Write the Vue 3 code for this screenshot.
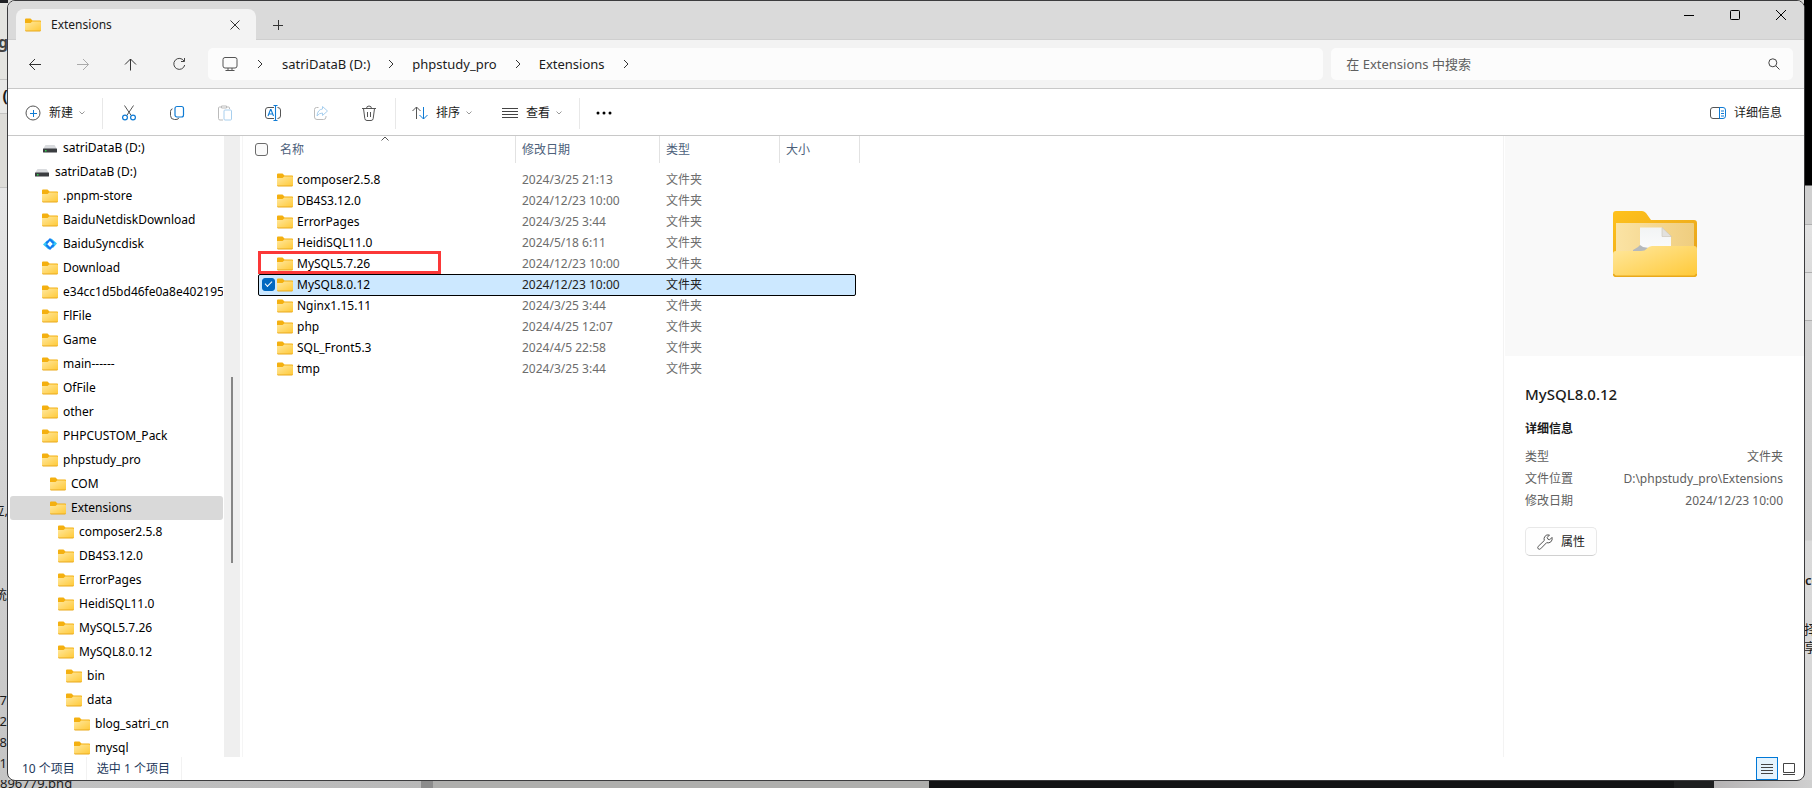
<script setup>
import { ref } from 'vue'

const tree = [
  { name: 'satriDataB (D:)', level: 0, icon: 'drive' },
  { name: 'satriDataB (D:)', level: -1, icon: 'drive' },
  { name: '.pnpm-store', level: 0 },
  { name: 'BaiduNetdiskDownload', level: 0 },
  { name: 'BaiduSyncdisk', level: 0, icon: 'sync' },
  { name: 'Download', level: 0 },
  { name: 'e34cc1d5bd46fe0a8e402195', level: 0 },
  { name: 'FlFile', level: 0 },
  { name: 'Game', level: 0 },
  { name: 'main------', level: 0 },
  { name: 'OfFile', level: 0 },
  { name: 'other', level: 0 },
  { name: 'PHPCUSTOM_Pack', level: 0 },
  { name: 'phpstudy_pro', level: 0 },
  { name: 'COM', level: 1 },
  { name: 'Extensions', level: 1, current: true },
  { name: 'composer2.5.8', level: 2 },
  { name: 'DB4S3.12.0', level: 2 },
  { name: 'ErrorPages', level: 2 },
  { name: 'HeidiSQL11.0', level: 2 },
  { name: 'MySQL5.7.26', level: 2 },
  { name: 'MySQL8.0.12', level: 2 },
  { name: 'bin', level: 3 },
  { name: 'data', level: 3 },
  { name: 'blog_satri_cn', level: 4 },
  { name: 'mysql', level: 4 },
]

const files = ref([
  { name: 'composer2.5.8', date: '2024/3/25 21:13' },
  { name: 'DB4S3.12.0', date: '2024/12/23 10:00' },
  { name: 'ErrorPages', date: '2024/3/25 3:44' },
  { name: 'HeidiSQL11.0', date: '2024/5/18 6:11' },
  { name: 'MySQL5.7.26', date: '2024/12/23 10:00', marked: true },
  { name: 'MySQL8.0.12', date: '2024/12/23 10:00', selected: true },
  { name: 'Nginx1.15.11', date: '2024/3/25 3:44' },
  { name: 'php', date: '2024/4/25 12:07' },
  { name: 'SQL_Front5.3', date: '2024/4/5 22:58' },
  { name: 'tmp', date: '2024/3/25 3:44' },
])

const crumbs = ['satriDataB (D:)', 'phpstudy_pro', 'Extensions']
const query = ref('')
</script>

<template>
  <div class="desktop">
    <svg class="defs" width="0" height="0" aria-hidden="true">
      <defs>
        <linearGradient id="fold" x1="0" y1="0" x2="1" y2="1">
          <stop offset="0" stop-color="#ffe89f" />
          <stop offset="1" stop-color="#ffc937" />
        </linearGradient>
        <linearGradient id="foldBack" x1="0" y1="0" x2="1" y2="1">
          <stop offset="0" stop-color="#ffc21c" />
          <stop offset="1" stop-color="#e6a21c" />
        </linearGradient>
        <linearGradient id="foldInner" x1="0" y1="0" x2="1" y2="0">
          <stop offset="0" stop-color="#fbe3a4" />
          <stop offset="1" stop-color="#efcd7f" />
        </linearGradient>
        <linearGradient id="paper" x1="0" y1="0" x2="0" y2="1">
          <stop offset="0" stop-color="#f2f4f5" />
          <stop offset="1" stop-color="#fdfdfd" />
        </linearGradient>
        <symbol id="i-folder" viewBox="0 0 16 16">
          <path d="M0 2.500Q0 1.500 1 1.500H5.500L7.500 3.500H15.200Q16 3.500 16 4.300V8H0Z" fill="#f4b010" />
          <path d="M0 6H5.600L7.200 4.600H15.200Q16 4.600 16 5.400V13.200Q16 14 15.200 14H.8Q0 14 0 13.200Z" fill="url(#fold)" />
          <path d="M.2 13.500Q.4 14 1 14H15Q15.600 14 15.800 13.500" fill="none" stroke="#e9a91c" />
        </symbol>
        <symbol id="i-drive" viewBox="0 0 16 16">
          <path d="M3.500 5H12.500L15 9H1Z" fill="#d9dbde" />
          <rect x="1" y="8.500" width="14" height="4" rx=".6" fill="#3b3d40" />
          <rect x="3" y="10" width="1.500" height="1.500" fill="#30d44c" />
        </symbol>
        <symbol id="i-sync" viewBox="0 0 16 16">
          <path d="M1 8.500L5 4.500L7 6L5 8.500L8 11L6.500 13.500Z" fill="#35c8f5" />
          <path d="M15 7.500L11 12L9 10L11 8L8 5L9.500 2.500Z" fill="#35c8f5" />
          <path d="M3.500 6.500L8 2L12.500 6.500L11 8L8 5L5 8ZM12.500 9.500L8 14L3.500 9.500L5 8L8 11L11 8Z" fill="#157bf2" />
        </symbol>
        <symbol id="i-chev" viewBox="0 0 8 10">
          <path d="M2 1L6 5L2 9" fill="none" stroke="#333" />
        </symbol>
        <symbol id="i-down" viewBox="0 0 8 8">
          <path d="M1.500 2.500L4 5L6.500 2.500" fill="none" stroke="#999" />
        </symbol>
      </defs>
    </svg>

    <div class="backdrop" aria-hidden="true">
      <div class="strip left">
        <span class="peek g">g</span>
        <span class="peek paren">(</span>
        <span class="peek yi">应,</span>
        <span class="peek tong">统</span>
        <span class="peek n1">7</span>
        <span class="peek n2">2</span>
        <span class="peek n3">8</span>
        <span class="peek n4">1</span>
      </div>
      <div class="strip right">
        <span class="peek co">co</span>
        <span class="peek ze">择</span>
        <span class="peek xiang">享</span>
      </div>
      <div class="strip bottom"><span class="peek png">896779.png</span></div>
    </div>

    <main class="window">
      <header class="titlebar">
        <div class="tab">
          <svg width="16" height="16"><use href="#i-folder" /></svg>
          <span class="tab-name">Extensions</span>
          <button class="tab-close" aria-label="关闭标签页">
            <svg width="10" height="10" viewBox="0 0 10 10"><path d="M.5 .5L9.500 9.500M9.500 .5L.5 9.500" fill="none" stroke="#333" /></svg>
          </button>
        </div>
        <button class="add" aria-label="新标签页">
          <svg width="10" height="10" viewBox="0 0 10 10"><path d="M5.500 0V10M0 5.500H10" fill="none" stroke="#333" /></svg>
        </button>
        <div class="win-buttons">
          <button aria-label="最小化"><svg width="10" height="10" viewBox="0 0 10 10"><path d="M0 5.500H10" stroke="#000" /></svg></button>
          <button aria-label="最大化"><svg width="10" height="10" viewBox="0 0 10 10"><rect x=".5" y=".5" width="9" height="9" rx=".8" fill="none" stroke="#000" /></svg></button>
          <button aria-label="关闭"><svg width="10" height="10" viewBox="0 0 10 10"><path d="M0 0L10 10M10 0L0 10" stroke="#000" /></svg></button>
        </div>
      </header>

      <nav class="address">
        <div class="history">
          <button aria-label="后退"><svg width="14" height="14" viewBox="0 0 14 14"><path d="M13 7.500H1.500M7 2L1.500 7.500L7 13" fill="none" stroke="#333" /></svg></button>
          <button aria-label="前进"><svg width="14" height="14" viewBox="0 0 14 14"><path d="M1 7.500H12.500M7 2L12.500 7.500L7 13" fill="none" stroke="#aaa" /></svg></button>
          <button aria-label="向上"><svg width="14" height="14" viewBox="0 0 14 14"><path d="M6.500 13.500V2M1 7.500L6.500 2L12 7.500" fill="none" stroke="#333" /></svg></button>
          <button aria-label="刷新"><svg width="14" height="14" viewBox="0 0 14 14"><path d="M12 4A5.500 5.500 0 1 0 12.700 8M12.500 1V4.500H9" fill="none" stroke="#444" /></svg></button>
        </div>
        <div class="path">
          <svg width="16" height="16" viewBox="0 0 16 16"><rect x="1" y="1.500" width="14" height="10.500" rx="2" fill="none" stroke="#555" /><path d="M6 12V14.500M10 12V14.500M3.500 14.500H12.500" stroke="#555" fill="none" /></svg>
          <svg class="sep root" width="8" height="10"><use href="#i-chev" /></svg>
          <template v-for="c in crumbs" :key="c">
            <a href="#" class="crumb">{{ c }}</a>
            <svg class="sep" width="8" height="10"><use href="#i-chev" /></svg>
          </template>
        </div>
        <label class="search">
          <input v-model="query" type="text" placeholder="在 Extensions 中搜索" aria-label="搜索" />
          <svg width="12" height="12" viewBox="0 0 12 12"><circle cx="4.800" cy="4.800" r="4" fill="none" stroke="#444" /><path d="M7.700 7.700L11.500 11.500" stroke="#444" /></svg>
        </label>
      </nav>

      <div class="toolbar" role="toolbar">
        <button class="tool">
          <svg width="16" height="16" viewBox="0 0 16 16"><circle cx="8" cy="8" r="7" fill="none" stroke="#555" /><path d="M8.500 5V12M5 8.500H12" stroke="#0f7bd4" /></svg>
          <span>新建</span>
          <svg class="down" width="8" height="8"><use href="#i-down" /></svg>
        </button>
        <i class="bar"></i>
        <div class="icons">
          <button aria-label="剪切"><svg width="16" height="16" viewBox="0 0 16 16"><path d="M3.500 .5L10.200 10.500M12.500 .5L5.800 10.500" stroke="#555" fill="none" /><circle cx="4" cy="12.500" r="2.400" fill="none" stroke="#0f7bd4" stroke-width="1.200" /><circle cx="12" cy="12.500" r="2.400" fill="none" stroke="#0f7bd4" stroke-width="1.200" /></svg></button>
          <button aria-label="复制"><svg width="16" height="16" viewBox="0 0 16 16"><path d="M3.500 3.800Q1.500 4.200 1.500 6.500V10.500Q1.500 14.500 5.500 14.500H7Q9.500 14.500 9.800 12.800" fill="none" stroke="#555" /><rect x="6" y="1.500" width="8.500" height="10.500" rx="2" fill="none" stroke="#0f7bd4" stroke-width="1.200" /></svg></button>
          <button aria-label="粘贴"><svg width="16" height="16" viewBox="0 0 16 16"><path d="M6 15H3Q1.500 15 1.500 13.500V3Q1.500 2 2.500 2H4.500M9.500 2H11.500Q12.500 2 12.500 3V4M4.500 1H9.500V3H4.500Z" fill="none" stroke="#bbb" /><rect x="7" y="5" width="7.500" height="10" rx="1" fill="none" stroke="#a8cfee" /></svg></button>
          <button aria-label="重命名"><svg width="16" height="16" viewBox="0 0 16 16"><path d="M9 2.500H3Q.5 2.500 .5 5V11Q.5 13.500 3 13.500H9M12.500 2.500Q15.500 2.500 15.500 5V11Q15.500 13.500 12.500 13.500" fill="none" stroke="#555" /><path d="M3 11L5.500 4.500H6L8.500 11M4 9H7.500M10.500 1V15M8.500 .5H12.500M8.500 15.500H12.500" fill="none" stroke="#0f7bd4" stroke-width="1.100" /></svg></button>
          <button aria-label="共享"><svg width="16" height="16" viewBox="0 0 16 16"><path d="M5.500 2.500H3.500Q1.500 2.500 1.500 4.500V12Q1.500 14.500 4 14.500H10.500Q13 14.500 13 12V11" fill="none" stroke="#bbb" /><path d="M9.500 1.500L14.500 6L9.500 10.500V8Q6 8 4 11Q4.500 4.500 9.500 4Z" fill="none" stroke="#a8cfee" /></svg></button>
          <button aria-label="删除"><svg width="16" height="16" viewBox="0 0 16 16"><path d="M1 3.500H15M5.500 3.500Q5.500 1 8 1T10.500 3.500M2.500 3.500L3.800 13.500Q4 15.500 6 15.500H10Q12 15.500 12.200 13.500L13.500 3.500M6.500 7V12M9.500 7V12" fill="none" stroke="#555" /></svg></button>
        </div>
        <i class="bar"></i>
        <button class="tool">
          <svg width="16" height="16" viewBox="0 0 16 16"><path d="M4.500 14V2M.5 6L4.500 2L8.500 6" fill="none" stroke="#555" /><path d="M11.500 2V14M7.500 10L11.500 14L15.500 10" fill="none" stroke="#0f7bd4" /></svg>
          <span>排序</span>
          <svg class="down" width="8" height="8"><use href="#i-down" /></svg>
        </button>
        <button class="tool view">
          <svg width="16" height="16" viewBox="0 0 16 16"><path d="M0 3.500H16M0 6.500H16M0 9.500H16M0 12.500H16" stroke="#444" /></svg>
          <span>查看</span>
          <svg class="down" width="8" height="8"><use href="#i-down" /></svg>
        </button>
        <i class="bar"></i>
        <button class="tool" aria-label="更多"><svg width="16" height="4" viewBox="0 0 16 4"><circle cx="2" cy="2" r="1.500" /><circle cx="8" cy="2" r="1.500" /><circle cx="14" cy="2" r="1.500" /></svg></button>
        <button class="tool info">
          <svg width="16" height="16" viewBox="0 0 16 16"><path d="M10 2.500H3Q.5 2.500 .5 5V11Q.5 13.500 3 13.500H10" fill="none" stroke="#555" /><path d="M9.500 2.500H13Q15.500 2.500 15.500 5V11Q15.500 13.500 13 13.500H9.500ZM11 6H14M11 8.500H14M11 11H14" fill="none" stroke="#0f7bd4" /></svg>
          <span>详细信息</span>
        </button>
      </div>

      <div class="content">
        <aside class="side">
          <ul class="tree">
            <li v-for="(n, i) in tree" :key="i">
              <a href="#" :class="['node', 'level' + (n.level + 1), { current: n.current }]">
                <svg width="16" height="16"><use :href="'#i-' + (n.icon || 'folder')" /></svg>
                <span>{{ n.name }}</span>
              </a>
            </li>
          </ul>
          <div class="scroll"><i class="thumb"></i></div>
        </aside>

        <section class="list">
          <table>
            <colgroup>
              <col class="c-check" /><col class="c-name" /><col class="c-date" /><col class="c-type" /><col class="c-size" />
            </colgroup>
            <thead>
              <tr>
                <th class="check"><input type="checkbox" aria-label="全选" /></th>
                <th>名称<svg class="sort" width="8" height="5" viewBox="0 0 8 5"><path d="M.5 4.500L4 1L7.500 4.500" fill="none" stroke="#555" /></svg></th>
                <th>修改日期</th>
                <th>类型</th>
                <th>大小</th>
              </tr>
            </thead>
            <tbody>
              <tr v-for="f in files" :key="f.name" :class="{ selected: f.selected, marked: f.marked }">
                <td class="check"><input v-if="f.selected" v-model="f.selected" type="checkbox" :aria-label="f.name" /></td>
                <td class="name"><span class="file"><svg width="16" height="16"><use href="#i-folder" /></svg>{{ f.name }}</span></td>
                <td>{{ f.date }}</td>
                <td>文件夹</td>
                <td></td>
              </tr>
            </tbody>
          </table>
        </section>

        <aside class="details">
          <div class="preview">
            <svg width="84" height="66" viewBox="0 0 84 66">
              <path d="M0 3Q0 0 3 0H29Q31 0 33 2L38 9H81Q84 9 84 12V50H0Z" fill="url(#foldBack)" />
              <path d="M3 12H80Q81 12 81 13V45H3Z" fill="url(#foldInner)" />
              <path d="M27 16.500H49L58 26V45H27Z" fill="url(#paper)" />
              <path d="M49 16.500L58.500 25.500H49Z" fill="#e2e1de" stroke="#c9c3b4" stroke-width=".6" />
              <path d="M20 39L25 36L27 34L30 36L36 37L32 40H20Z" fill="#b5b9bd" />
              <path d="M0 43Q0 40 3 40H28Q32 40 34 37.500Q36 35 39 35H81Q84 35 84 38V63Q84 66 81 66H3Q0 66 0 63Z" fill="url(#fold)" />
              <path d="M.5 63Q1 65.300 3 65.300H81Q83 65.300 83.500 63" fill="none" stroke="#e9a91c" stroke-width="1.500" />
            </svg>
          </div>
          <div class="facts">
            <h2>MySQL8.0.12</h2>
            <h3>详细信息</h3>
            <dl>
              <div><dt>类型</dt><dd>文件夹</dd></div>
              <div><dt>文件位置</dt><dd>D:\phpstudy_pro\Extensions</dd></div>
              <div><dt>修改日期</dt><dd>2024/12/23 10:00</dd></div>
            </dl>
            <button class="props">
              <svg width="16" height="16" viewBox="0 0 16 16"><path d="M12.500 1Q9.500 .2 7.800 2.500Q6.600 4.300 7.300 6.500L1.200 12.400Q.2 13.600 1.200 14.800Q2.500 15.800 3.600 14.800L9.600 8.700Q12 9.400 13.800 7.900Q15.800 6 15 3.400L12.600 5.800L10.900 5.200L10.200 3.400Z" fill="none" stroke="#555" /></svg>
              <span>属性</span>
            </button>
          </div>
        </aside>
      </div>

      <footer class="status">
        <span>10 个项目</span>
        <span>选中 1 个项目</span>
        <div class="modes">
          <button class="active" aria-label="详细列表"><svg width="12" height="12" viewBox="0 0 12 12"><path d="M0 1.500H12M0 4.500H12M0 7.500H12M0 10.500H12" stroke="#444" /></svg></button>
          <button aria-label="大图标"><svg width="12" height="12" viewBox="0 0 12 12"><path d="M.5 .5H11.500V9.500H.5ZM0 11.500H12" fill="none" stroke="#444" /></svg></button>
        </div>
      </footer>
    </main>
  </div>
</template>

<style>
body {
  margin: 0;
}
</style>

<style scoped>
* {
  box-sizing: border-box;
}
.desktop {
  position: relative;
  display: flex;
  height: 100vh;
  padding: 0 7px 7px;
  overflow: hidden;
  background: #d8d8d6;
  font: 12px/20px "Noto Sans", "Noto Sans CJK SC", sans-serif;
  color: #1b1b1b;
}
.defs {
  position: absolute;
}
button {
  display: flex;
  align-items: center;
  justify-content: center;
  padding: 0;
  border: 0;
  background: none;
  color: inherit;
  font: inherit;
}
svg {
  display: block;
  flex: none;
}
a {
  color: inherit;
  text-decoration: none;
}

/* Other windows behind this one */
.backdrop {
  position: absolute;
  inset: 0;
}
.strip {
  position: absolute;
  overflow: hidden;
}
.left {
  inset: 0 auto 0 0;
  width: 8px;
  background: linear-gradient(#202124 3px, #e4e4e0 3px, #e4e4e0 79px, #c4c4c2 79px, #c4c4c2 80px, #e8e8e6 80px, #e8e8e6 113px, #c4c4c2 113px, #c4c4c2 114px, #dddcd8 114px, #dddcd8 187px, #c4c4c2 187px, #c4c4c2 188px, #e6e6e6 188px, #d2d2d2 500px, #c4c4c4);
}
.right {
  inset: 0 0 0 auto;
  width: 8px;
  background: linear-gradient(#000 185px, #cfcfcf 186px, #cfcfcf 224px, #b0b0b0 224px, #b0b0b0 225px, #e2e2e2 225px, #dcdcdc 272px, #b0b0b0 272px, #b0b0b0 273px, #e0e0e0 273px, #e0e0e0 320px, #b0b0b0 320px, #b0b0b0 321px, #d2d2d2 321px, #cdcdcd 540px, #dadada 541px, #d4d4d4);
}
.bottom {
  inset: auto 0 0;
  height: 8px;
  background: linear-gradient(90deg, #c3c3c3 0, #b8b8b8 421px, #8c8c8c 421px, #8c8c8c 433px, #aeaeac 433px, #aeaeac 929px, #131415 929px, #131415 1674px, #1e1f20 1674px, #1e1f20 1714px, #b5b3b4 1714px, #cfcfcf);
}
.peek {
  position: absolute;
  font: 13px/20px "Noto Sans", "Noto Sans CJK SC", sans-serif;
  white-space: nowrap;
}
.g { top: 32px; right: 0; color: #444; font-size: 16px; font-weight: 700; }
.paren { top: 86px; right: 0; font-size: 16px; font-weight: 700; }
.yi { top: 500px; right: 0; }
.tong { top: 584px; right: 1px; }
.n1 { top: 690px; right: 1px; }
.n2 { top: 711px; right: 1px; }
.n3 { top: 732px; right: 1px; }
.n4 { top: 753px; right: 1px; }
.co { top: 570px; left: 1px; font-weight: 600; }
.ze { top: 619px; left: 0; }
.xiang { top: 637px; left: 0; }
.png { top: -7px; left: 0; }

.window {
  position: relative;
  display: flex;
  flex: 1;
  flex-direction: column;
  min-width: 0;
  overflow: hidden;
  border: 1px solid #3b3b3d;
  border-radius: 8px;
  background: #fff;
}

.titlebar {
  display: flex;
  flex: none;
  height: 39px;
  border-bottom: 1px solid #cfcfcf;
  background: #dadada;
}
.tab {
  display: flex;
  align-items: center;
  width: 240px;
  height: 31px;
  margin: 8px 0 0 8px;
  padding: 0 11px 0 9px;
  border-radius: 8px 8px 0 0;
  background: #f3f3f3;
}
.tab-name {
  flex: 1;
  margin-left: 10px;
}
.tab-close {
  width: 20px;
  height: 20px;
}
.add {
  width: 44px;
  height: 31px;
  margin-top: 8px;
}
.win-buttons {
  display: flex;
  height: 28px;
  margin-left: auto;
}
.win-buttons button {
  width: 46px;
}

.address {
  display: flex;
  flex: none;
  gap: 8px;
  align-items: center;
  height: 49px;
  padding-right: 11px;
  border-bottom: 1px solid #c8c8c8;
  background: #f3f3f3;
}
.history {
  display: flex;
  gap: 16px;
  padding: 0 5px 0 11px;
}
.history button {
  width: 32px;
  height: 32px;
}
.path,
.search {
  display: flex;
  align-items: center;
  height: 32px;
  border-radius: 5px;
  background: #fcfcfc;
  font-size: 13px;
}
.path {
  flex: 1102;
  min-width: 0;
  padding-left: 14px;
}
.path .sep {
  margin: 0 17px;
}
.path .root {
  margin: 0 18px;
}
.search {
  flex: 434;
  min-width: 0;
  padding: 0 13px 0 15px;
}
.search input {
  flex: 1;
  min-width: 0;
  padding: 0;
  border: 0;
  outline: 0;
  background: none;
  font: inherit;
}
.search input::placeholder {
  color: #606060;
  opacity: 1;
}

.toolbar {
  display: flex;
  flex: none;
  align-items: center;
  height: 47px;
  padding: 2px 16px 0 11px;
  border-bottom: 1px solid #c8c8c8;
}
.tool {
  padding: 0 6px;
}
.tool span {
  margin-left: 8px;
}
.tool .down {
  margin-left: 5px;
}
.toolbar .bar {
  width: 1px;
  height: 31px;
  margin: 0 10px;
  background: #e8e8e8;
}
.icons {
  display: flex;
  gap: 16px;
}
.icons button {
  width: 32px;
  height: 32px;
}
.view {
  margin-left: 17px;
}
.info {
  margin-left: auto;
}

.content {
  display: flex;
  flex: 1;
  min-height: 0;
}
.side {
  display: flex;
  flex: none;
  width: 235px;
  border-right: 1px solid #f5f5f5;
}
.tree {
  flex: 1;
  min-width: 0;
  margin: 0;
  padding: 0 1px 0 2px;
  overflow: hidden;
  list-style: none;
}
.node {
  display: flex;
  gap: 5px;
  align-items: center;
  height: 24px;
  overflow: hidden;
  border-radius: 3px;
  color: #000;
  white-space: nowrap;
}
.current {
  background: #d9d9d9;
}
.level0 { padding-left: 24px; }
.level1 { padding-left: 32px; }
.level2 { padding-left: 40px; }
.level3 { padding-left: 48px; }
.level4 { padding-left: 56px; }
.level5 { padding-left: 64px; }
.scroll {
  display: flex;
  flex: none;
  justify-content: center;
  width: 16px;
  margin-right: 2px;
  background: #efefef;
}
.thumb {
  width: 2px;
  height: 30%;
  margin-top: 241px;
  background: #868686;
}

.list {
  flex: 1;
  min-width: 0;
  padding-left: 12px;
}
table {
  width: 605px;
  border-collapse: separate;
  border-spacing: 0;
  table-layout: fixed;
}
.c-check { width: 19px; }
.c-name { width: 242px; }
.c-date { width: 144px; }
.c-type { width: 120px; }
.c-size { width: 80px; }
th {
  position: relative;
  height: 27px;
  padding: 0 0 0 6px;
  border-right: 1px solid #e2e2e2;
  color: #4c607a;
  font-weight: 400;
  text-align: left;
}
th.check {
  padding: 0;
  border: 0;
}
.sort {
  position: absolute;
  top: 0;
  left: calc(50% - 14px);
}
tbody::before {
  display: block;
  height: 6px;
  content: "";
}
tbody tr {
  position: relative;
  z-index: 0;
}
td {
  height: 21px;
  padding: 0 0 0 6px;
  color: #6d6d6d;
  line-height: 20px;
  white-space: nowrap;
}
td.check {
  padding: 0 0 0 7px;
}
td.name {
  padding-left: 3px;
  color: #000;
}
.file {
  display: flex;
  gap: 4px;
  align-items: center;
}
input[type="checkbox"] {
  display: block;
  width: 13px;
  height: 13px;
  margin: 0;
  border: 1px solid #6b6b6b;
  border-radius: 3px;
  appearance: none;
  background: #fafafa;
}
input[type="checkbox"]:checked {
  position: relative;
  border-color: #0067c0;
  background: #0067c0;
}
input[type="checkbox"]:checked::after {
  position: absolute;
  top: 2px;
  left: 2px;
  width: 6px;
  height: 3px;
  border: solid #fff;
  border-width: 0 0 1px 1px;
  content: "";
  transform: rotate(-45deg);
}
.selected td {
  color: #222;
}
.selected td.name {
  color: #000;
}
.selected td.check::before,
.marked td.check::before {
  position: absolute;
  box-sizing: border-box;
  content: "";
  pointer-events: none;
}
.selected td.check::before {
  z-index: -1;
  inset: 0 4px -1px 3px;
  border: 1px solid #000;
  border-radius: 2px;
  background: #cce8ff;
}
.marked td.check::before {
  inset: -2px auto 0 3px;
  width: 183px;
  border: 3px solid #fb3838;
}

.details {
  flex: none;
  width: 301px;
  border-left: 1px solid #f3f3f3;
}
.preview {
  display: flex;
  justify-content: center;
  height: 220px;
  margin-left: 1px;
  padding-top: 75px;
  background: #f9f9f9;
}
.facts {
  padding: 27px 21px 0;
}
h2 {
  margin: 0;
  font-size: 15px;
  font-weight: 500;
  line-height: 22px;
}
h3 {
  margin: 14px 0 7px;
  font-size: 12px;
  font-weight: 700;
}
dl {
  margin: 0;
}
dl div {
  display: flex;
  justify-content: space-between;
  line-height: 22px;
  color: #606060;
}
dd {
  margin: 0;
}
.props {
  gap: 8px;
  height: 29px;
  margin-top: 15px;
  padding: 0 11px;
  border: 1px solid #e8e8e8;
  border-bottom-color: #d0d0d0;
  border-radius: 5px;
  background: #fefefe;
}

.status {
  display: flex;
  flex: none;
  height: 23px;
  padding: 0 4px 0 14px;
  color: #1e395b;
  line-height: 23px;
}
.status span {
  margin-right: 10px;
  padding-right: 11px;
  border-right: 1px solid #f2f2f2;
}
.modes {
  display: flex;
  margin-left: auto;
}
.modes button {
  width: 22px;
  height: 23px;
}
.modes .active {
  border: 1px solid #0078d7;
  background: #e5f3fd;
}
</style>
